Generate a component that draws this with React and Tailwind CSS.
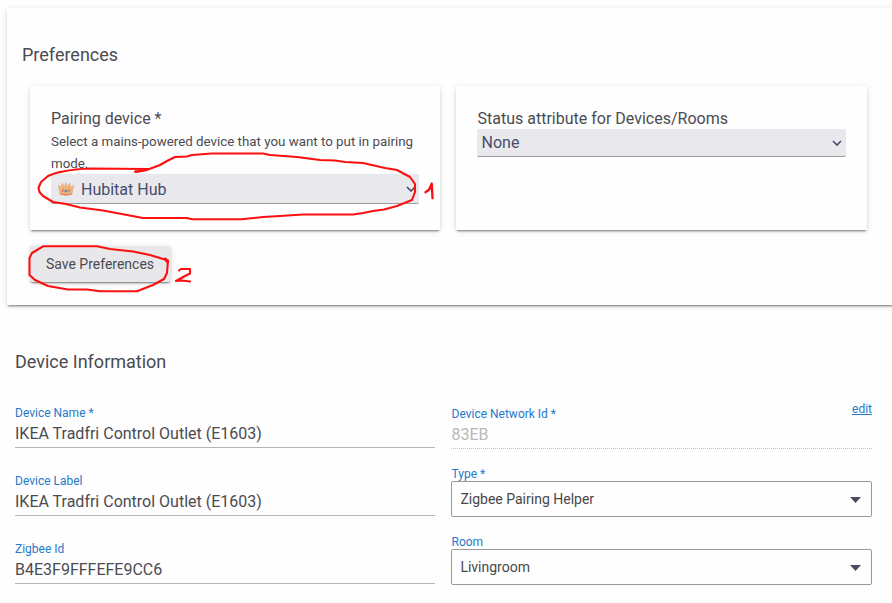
import React from "react";

const cardShadow =
  "shadow-[0_2px_2px_-1px_rgba(0,0,0,0.5),0_1px_6px_0_rgba(0,0,0,0.12)]";

function Chevron() {
  return (
    <svg className="h-[6px] w-[10px] shrink-0" viewBox="0 0 10 6" fill="none" stroke="#41496b" strokeWidth="1.6">
      <path d="M1 1l4 4 4-4" />
    </svg>
  );
}

function Crown() {
  return (
    <svg className="h-[14px] w-[16px] shrink-0" viewBox="0 0 16 14">
      <path d="M.5 3.2L3 5.2L4.2 1.2L6.4 4.4L8 .8L9.6 4.4L11.8 1.2L13 5.2L15.5 3.2L14 12.3Q8 14.6 2 12.3z" fill="#edb680" stroke="#e5a06c" strokeWidth=".5" />
      <path d="M2.2 11.8q5.8 2 11.6 0" fill="none" stroke="#df7c48" strokeWidth="1.1" />
      <path d="M5.2 5.5v4M10.8 5.5v4" stroke="#dd8e59" strokeWidth=".7" />
      <circle cx="8" cy="9" r="1.5" fill="#4d8fc9" />
      <circle cx="4.6" cy="8.8" r=".9" fill="#e2604a" />
      <circle cx="11.4" cy="8.8" r=".9" fill="#e2604a" />
    </svg>
  );
}

function Field({ label, value }) {
  return (
    <div className="flex h-[68px] flex-col text-[#4b4b52]">
      <label className="text-xs leading-[14px] text-[#2779c9]">{label}</label>
      <div className="h-[28px] border-b border-[#b5b5b5] text-base leading-[27px]">{value}</div>
    </div>
  );
}

function SelectField({ label, value }) {
  return (
    <div className="flex h-[68px] flex-col">
      <label className="pl-[0.5px] text-xs leading-[14px] text-[#2779c9]">{label}</label>
      <div className="flex h-9 items-center justify-between rounded-[2px] border border-[#999] pr-[10px] pl-[8.4px] text-sm text-[#484848]">
        <span>{value}</span>
        <svg className="mt-px h-[6px] w-[11px]" viewBox="0 0 11 6">
          <path d="M0 0h11L5.5 6z" fill="#4c4b60" />
        </svg>
      </div>
    </div>
  );
}

function Annotations() {
  return (
    <svg className="pointer-events-none absolute top-0 left-0" width="892" height="603" fill="none" stroke="#fb1010" strokeWidth="2.1" strokeLinecap="round" strokeLinejoin="round">
      <path d="M135 171.5L145 170L148 169L90 168.5Q75 169 63 171.5Q54 173 48 176L41 182L38.5 188L39.5 192L43 196L53 202L66 204L80 207.5L103 210.5L143 218L187 218L192 219.3H242L263 217L280 216L303 214.5H353L363 213L373 211L384 209.5L397 206L412 200L415 192V184L410 177L397 170L385 168L363 163L345 162L335 160.5L320 160L297 157L270 155L263 153.5H212L192 155L187 156.5L175 157L167 161L160 165L152 168L145 170.5L136 172" />
      <path d="M43 246.3H97L110 249L133 251.5L150 255L168 260.5L167 273L164 279L153 285L137 291.3H100L87 289.5H68L48 286L35 280L29.5 275V258L32 253Z" />
      <path d="M165.5 259l2 3" strokeWidth="3" />
      <path d="M425.5 192.3L429 189.8L431.8 183.5L432.5 198.2M429 189.8L431.5 186" strokeWidth="2.3" />
      <path d="M179 270.5l2-1.5h9v4.5l-5 2.5l-9 5l6-.5l8 1" />
    </svg>
  );
}

export default function App() {
  return (
    <div className="relative h-[603px] w-[892px] overflow-hidden bg-[#fefefe] font-['Roboto',sans-serif] text-[#4b4b52]">
      <section className={`ml-[7px] h-[297px] w-[900px] bg-[#fefefe] pl-[15px] mt-2 ${cardShadow}`}>
        <h2 className="h-[78px] pt-[35px] text-lg leading-6">Preferences</h2>
        <div className="ml-2 flex gap-4">
          <div className={`h-[144px] w-[410px] bg-[#fefefe] pt-[22px] pr-[21px] pl-[21px] ${cardShadow}`}>
            <div className="text-base leading-[22px]">Pairing device *</div>
            <p className="-mr-2 h-[44px] pt-px text-[13.33px] leading-[22px]">Select a mains-powered device that you want to put in pairing<br />mode.</p>
            <div className="flex h-[30px] items-center rounded-[2px] border-b border-[#9e9e9e] bg-[#e8e8ed] pt-px pr-[3px] pl-[7px] text-base text-[#474e6b]">
              <Crown />
              <span className="ml-[7px] flex-1 pt-px">Hubitat Hub</span>
              <Chevron />
            </div>
          </div>
          <div className={`h-[144px] w-[411px] bg-[#fefefe] pt-[22px] pr-[21px] pl-[21px] ${cardShadow}`}>
            <div className="pl-[0.5px] text-base leading-[21px]">Status attribute for Devices/Rooms</div>
            <div className="flex h-[28px] items-center justify-between rounded-[2px] border-b border-[#9e9e9e] bg-[#e8e8ed] pr-1 pl-[4.5px] text-base text-[#474e6b]">
              <span>None</span>
              <Chevron />
            </div>
          </div>
        </div>
        <button className={`mt-4 ml-[7.5px] block h-[36px] w-[141px] rounded-[3px] bg-[#e8e8ea] text-sm ${cardShadow}`}>Save Preferences</button>
      </section>
      <section className="px-[15px] pt-[45px]">
        <h2 className="text-lg leading-6">Device Information</h2>
        <div className="flex gap-4">
          <div className="w-[420px] pt-8">
            <Field label="Device Name *" value="IKEA Tradfri Control Outlet (E1603)" />
            <Field label="Device Label" value="IKEA Tradfri Control Outlet (E1603)" />
            <Field label="Zigbee Id" value="B4E3F9FFFEFE9CC6" />
          </div>
          <div className="w-[421px] pt-[33px]">
            <div className="flex h-[60px] flex-col text-[#2779c9]">
              <div className="flex justify-between pl-[0.5px] text-xs leading-[14px]">
                <label>Device Network Id *</label>
                <a className="-mt-[5px] underline">edit</a>
              </div>
              <div className="h-[28px] border-b border-dotted border-[#c5c5c5] pl-[0.5px] text-base leading-[27px] text-[#b8b8b8]">83EB</div>
            </div>
            <SelectField label="Type *" value="Zigbee Pairing Helper" />
            <SelectField label="Room" value="Livingroom" />
          </div>
        </div>
      </section>
      <Annotations />
    </div>
  );
}
